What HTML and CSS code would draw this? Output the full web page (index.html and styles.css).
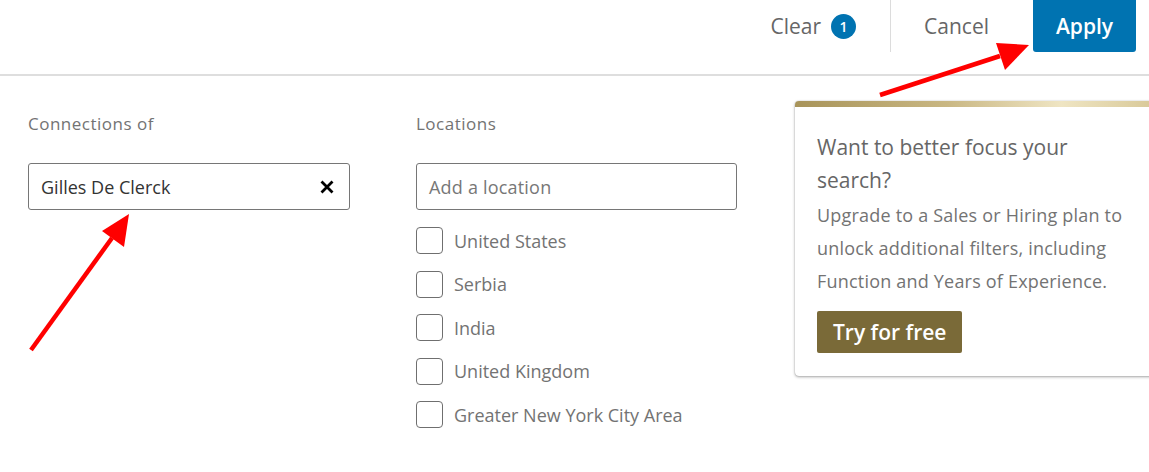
FILE: index.html
```html
<!DOCTYPE html>
<html lang="en">
<head>
<meta charset="utf-8">
<title>Filters</title>
<link rel="stylesheet" href="styles.css">
</head>
<body>
<div class="page">
  <header class="topbar">
    <button class="clear-btn">Clear <span class="badge">1</span></button>
    <span class="divider"></span>
    <button class="cancel-btn">Cancel</button>
    <button class="apply-btn">Apply</button>
  </header>
  <main class="filters">
    <section class="col col-conn">
      <h3 class="label">Connections of</h3>
      <div class="field">
        <span class="field-value">Gilles De Clerck</span>
        <svg class="x-icon" viewBox="0 0 16 16" width="16" height="16"><path d="M2.5 2.5 L13.5 13.5 M13.5 2.5 L2.5 13.5" stroke="#000" stroke-width="2.8" stroke-linecap="butt"/></svg>
      </div>
    </section>
    <section class="col col-loc">
      <h3 class="label">Locations</h3>
      <div class="field"><span class="placeholder">Add a location</span></div>
      <ul class="checks">
        <li><span class="box"></span>United States</li>
        <li><span class="box"></span>Serbia</li>
        <li><span class="box"></span>India</li>
        <li><span class="box"></span>United Kingdom</li>
        <li><span class="box"></span>Greater New York City Area</li>
      </ul>
    </section>
    <aside class="promo">
      <div class="promo-bar"></div>
      <div class="promo-body">
        <h2 class="promo-title">Want to better focus your search?</h2>
        <p class="promo-text">Upgrade to a Sales or Hiring plan to unlock additional filters, including Function and Years of Experience.</p>
        <button class="promo-btn">Try for free</button>
      </div>
    </aside>
  </main>
  <svg class="annotations" width="1149" height="472" viewBox="0 0 1149 472">
    <g fill="#f00" stroke="#f00">
      <line x1="31" y1="350" x2="112" y2="238" stroke-width="4.5"/>
      <polygon points="129,214 102,231 124,247" stroke="none"/>
      <line x1="880" y1="95" x2="1000" y2="56" stroke-width="4.5"/>
      <polygon points="1029,45 996,43 1005,70" stroke="none"/>
    </g>
  </svg>
</div>
</body>
</html>
```
FILE: styles.css
```css
* { box-sizing: border-box; }
html, body { margin: 0; padding: 0; background: #fff; }
body {
  width: 1149px;
  height: 472px;
  overflow: hidden;
  font-family: "Open Sans", "Noto Sans", sans-serif;
  color: #666;
}
.page { position: relative; width: 1149px; height: 472px; }

button {
  font-family: inherit;
  border: none;
  background: none;
  padding: 0;
  margin: 0;
  cursor: pointer;
}

.topbar {
  height: 76px;
  display: flex;
  justify-content: flex-end;
  align-items: flex-start;
  border-bottom: 2px solid #dedede;
}
.clear-btn {
  height: 52px;
  display: flex;
  align-items: center;
  font-size: 21px;
  color: #666;
}
.badge {
  display: inline-flex;
  align-items: center;
  justify-content: center;
  width: 25px;
  height: 25px;
  margin-left: 10px;
  border-radius: 50%;
  background: #0073b1;
  color: #fff;
  font-size: 14px;
  font-weight: 600;
}
.divider {
  width: 1px;
  height: 52px;
  background: #dcdcdc;
  margin: 0 33px 0 34px;
}
.cancel-btn {
  height: 52px;
  font-size: 21px;
  color: #666;
  margin-right: 44px;
}
.apply-btn {
  width: 103px;
  height: 52px;
  margin-right: 13px;
  background: #0073b1;
  color: #fff;
  font-size: 21px;
  font-weight: 600;
  border-radius: 0 0 3px 3px;
}

.filters {
  display: flex;
  align-items: flex-start;
  padding: 36px 0 0 28px;
}
.col { flex: 0 0 auto; }
.col-conn { width: 322px; margin-right: 66px; }
.col-loc { width: 321px; margin-right: 58px; }
.label {
  margin: 0;
  height: 24px;
  line-height: 24px;
  font-size: 17px;
  font-weight: 400;
  color: #737373;
  letter-spacing: 0.5px;
}
.field {
  margin-top: 27px;
  height: 47px;
  border: 1px solid #767676;
  border-radius: 3px;
  display: flex;
  align-items: center;
  justify-content: space-between;
  padding: 0 14px 0 12px;
  font-size: 18px;
}
.field-value { color: #333; }
.placeholder { color: #777; letter-spacing: 0.2px; }
.x-icon { display: block; }

.checks {
  list-style: none;
  margin: 17px 0 0;
  padding: 0;
}
.checks li {
  display: flex;
  align-items: center;
  height: 27px;
  margin-bottom: 16.5px;
  font-size: 18px;
  color: #737373;
}
.box {
  width: 27px;
  height: 27px;
  border: 1px solid #6f6f6f;
  border-radius: 4px;
  margin-right: 11px;
  flex: 0 0 auto;
}

.promo {
  flex: 0 0 auto;
  width: 380px;
  margin-top: -11px;
  background: #fff;
  border-radius: 4px;
  overflow: hidden;
  box-shadow: 0 1px 3px rgba(0,0,0,0.35), 0 0 1px rgba(0,0,0,0.3);
}
.promo-bar {
  height: 6px;
  background: linear-gradient(90deg, #a8945a 0%, #c9b783 40%, #efe5c3 70%, #d3c28e 100%);
}
.promo-body {
  padding: 24px 20px 23px 22px;
}
.promo-title {
  margin: 0;
  width: 285px;
  font-size: 21px;
  font-weight: 400;
  line-height: 33px;
  color: #666;
}
.promo-text {
  margin: 2px 0 0;
  width: 312px;
  font-size: 18px;
  line-height: 33px;
  color: #737373;
  letter-spacing: 0.2px;
}
.promo-btn {
  margin-top: 13px;
  height: 42px;
  padding: 0 16px;
  background: #7a6a38;
  color: #fff;
  font-size: 21px;
  font-weight: 600;
  border-radius: 2px;
}

.annotations {
  position: absolute;
  left: 0;
  top: 0;
  pointer-events: none;
}
```
